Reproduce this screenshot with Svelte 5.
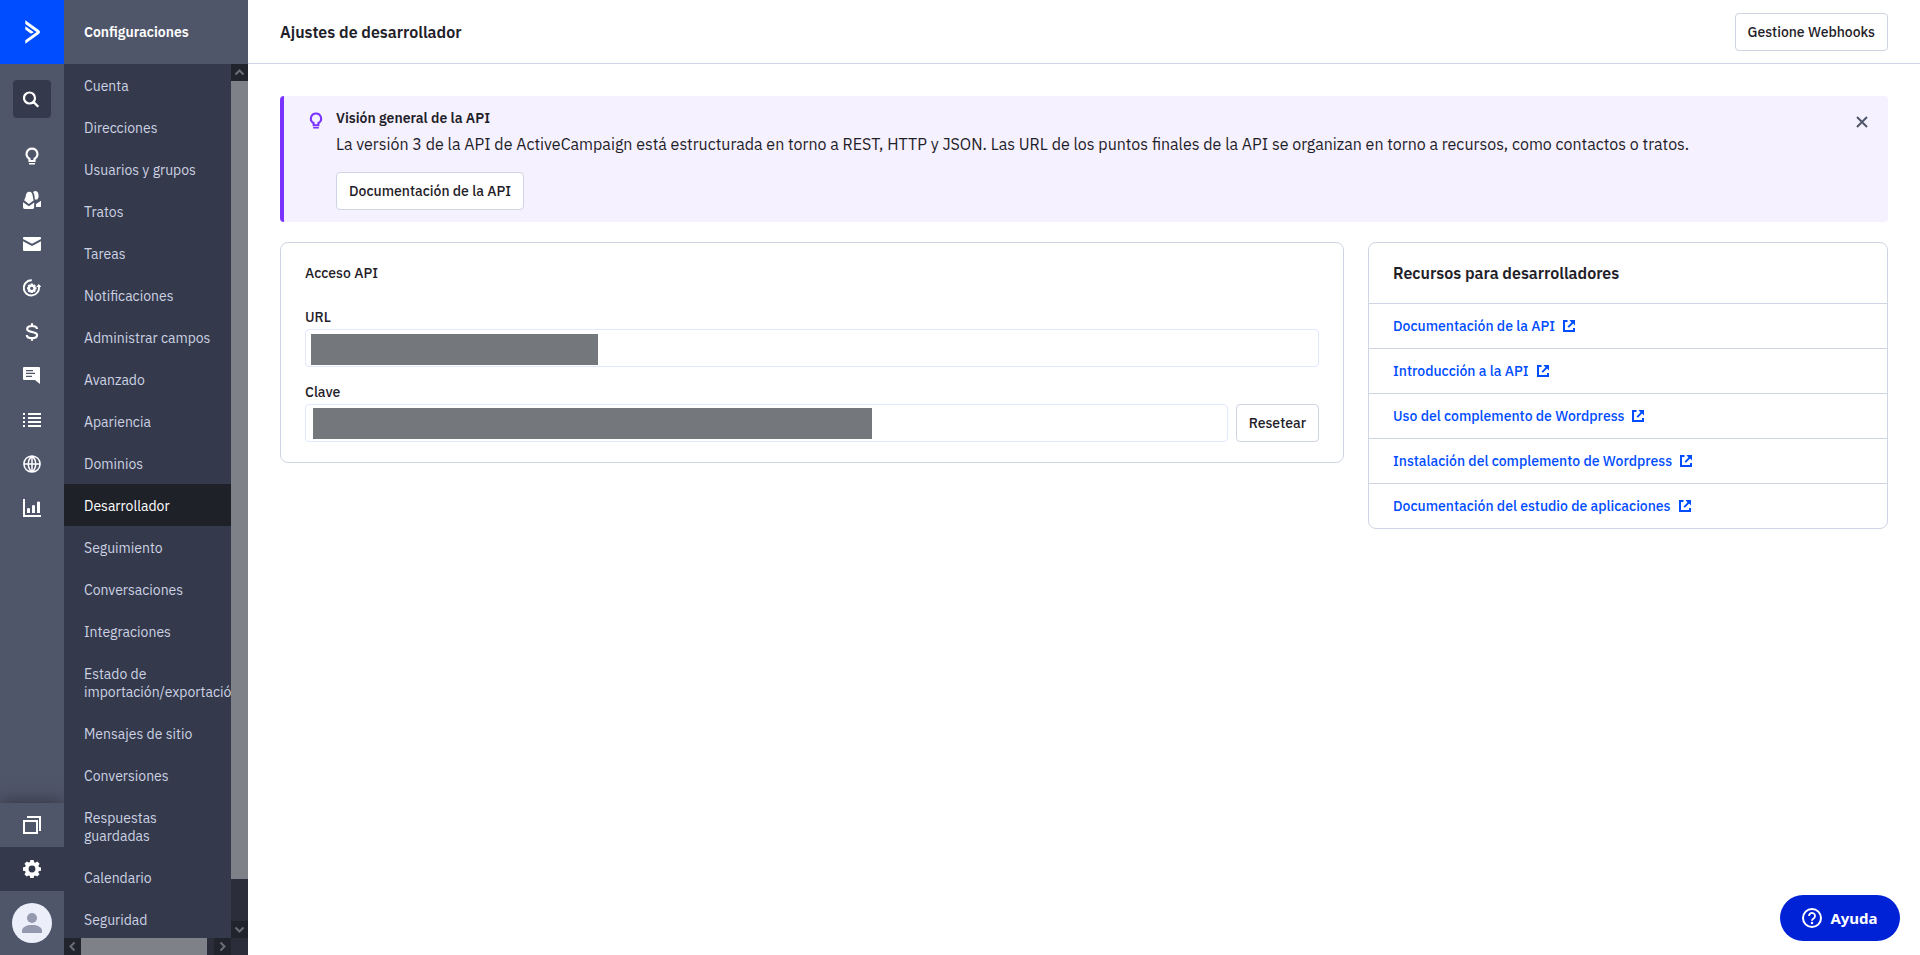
<script lang="ts">
    interface Icon {
        name: string;
        fill?: string;
        stroke?: string;
        width?: number;
    }

    const bulb =
        "M9 .5a6.5 6.5 0 0 0-3.6 11.9V15h7.2v-2.6A6.5 6.5 0 0 0 9 .5zm0 2.2a4.3 4.3 0 0 1 2.2 8l-.8.5V13H7.6v-1.8l-.8-.5a4.3 4.3 0 0 1 2.2-8zM6 15.9h6v1.7H6z";

    const gear =
        "M7.3 0h3.4l.4 2.2 1.3.5L14.3 1.5l2.3 2.3-1.2 1.9.5 1.3 2.1.4v3.3l-2.2.4-.5 1.3 1.2 1.9-2.3 2.3-1.9-1.2-1.300.5-.4 2.400H7.300l-.4-2.400-1.300-.5-1.900 1.200-2.300-2.300 1.200-1.900-.5-1.300L0 10.700V7.300l2.200-.4.5-1.300-1.200-1.900 2.300-2.300 1.900 1.200 1.300-.5zM9 5.600a3.400 3.400 0 1 0 0 6.800 3.400 3.400 0 0 0 0-6.800z";

    const railIcons: Icon[] = [
        { name: "Guías", fill: bulb },
        {
            name: "Contactos",
            fill: "M6.300.8c-2.200 0-3.300 2-3.600 4.300-.2 1.700-.9 3-1.600 4.200L5.900 13l4.900-3.700C10.200 8 9.900 6.800 9.800 5.100 9.600 2.800 8.500.8 6.300.8zM0 11.200l5.900 4 5.300-3.800V16c0 1.200-.6 2-1.700 2H1.800C.6 18 0 17.200 0 16zM12.400 0c2.500 0 3.400 3.100 3.200 5.400-.1 1.500-.7 2.400-1.300 3.200h-2.200c-.7-1.600-.4-3.200-.8-4.900-.3-1.300-.8-2-1.200-2.500.6-.8 1.400-1.200 2.300-1.200zM13 13l5-3.200v5.400c0 .6-.4.9-.9.9H13z",
        },
        {
            name: "Campañas",
            fill: "M1 2h16q1 0 1 1v1L9 8.800 0 4V3q0-1 1-1zM0 6.200l9 4.800 9-4.800V15q0 1-1 1H1q-1 0-1-1z",
        },
        {
            name: "Automatizaciones",
            fill: "M13.200 8 15.800 5 18.400 8zM7.600 4.600h2.200l.3 1.300 1.200-.6 1.500 1.500-.6 1.200 1.300.3v2l-1.300.4.6 1.200-1.500 1.500-1.200-.6-.3 1.200H7.600l-.3-1.200-1.200.6-1.500-1.500.6-1.200-1.200-.4v-2l1.200-.3-.6-1.200 1.500-1.500 1.200.6zM8.700 7.700a1.600 1.600 0 1 0 0 3.200 1.600 1.600 0 0 0 0-3.200z",
            stroke: "M8.800 1.300a7.600 7.600 0 1 0 7 6",
            width: 1.9,
        },
        {
            name: "Ofertas",
            stroke: "M9 .2v3.200M9 14.700v3.100M13.900 5.900C13.900 3.900 12 3 9 3S4.200 4 4.200 5.900c0 4.200 9.900 2 9.900 6.100 0 2.100-2 3.100-5.100 3.100s-5.200-1-5.200-3.100",
            width: 2.2,
        },
        {
            name: "Conversaciones",
            fill: "M1 0h15q1 0 1 1v16l-5-4H1q-1 0-1-1V1q0-1 1-1zm2 3v1.200h7V3zm0 2.800V7h9V5.800zm0 2.900v1.200h6V8.700z",
        },
        {
            name: "Listas",
            fill: "M0 2h2v2H0zM5 2h13v2H5zM0 6h2v2H0zM5 6h13v2H5zM0 10h2v2H0zM5 10h13v2H5zM0 14h2v2H0zM5 14h13v2H5z",
        },
        {
            name: "Sitio web",
            stroke: "M9 .9a8.100 8.100 0 1 0 0 16.200A8.100 8.100 0 0 0 9 .9zM9 .9c-5 4.500-5 11.700 0 16.200M9 .9c5 4.500 5 11.700 0 16.200M9 1v16M1 9h16",
            width: 1.5,
        },
        {
            name: "Informes",
            fill: "M0 0h2v16h16v2H0zM4 10q0-1 1.500-1T7 10v4H4zM9 7q0-1 1.500-1T12 7v7H9zM14 3.500q0-1 1.500-1t1.500 1V14h-3z",
        },
    ];

    const settings = [
        "Cuenta",
        "Direcciones",
        "Usuarios y grupos",
        "Tratos",
        "Tareas",
        "Notificaciones",
        "Administrar campos",
        "Avanzado",
        "Apariencia",
        "Dominios",
        "Desarrollador",
        "Seguimiento",
        "Conversaciones",
        "Integraciones",
        "Estado de importación/exportación",
        "Mensajes de sitio",
        "Conversiones",
        "Respuestas guardadas",
        "Calendario",
        "Seguridad",
    ];

    const resources = [
        "Documentación de la API",
        "Introducción a la API",
        "Uso del complemento de Wordpress",
        "Instalación del complemento de Wordpress",
        "Documentación del estudio de aplicaciones",
    ];

    let current = $state("Desarrollador");
    let bannerOpen = $state(true);
</script>

{#snippet icon(item: Icon)}
    <svg width="18" height="18" viewBox="0 0 18 18" aria-hidden="true">
        {#if item.fill}
            <path d={item.fill} fill="currentColor" fill-rule="evenodd" />
        {/if}
        {#if item.stroke}
            <path
                d={item.stroke}
                fill="none"
                stroke="currentColor"
                stroke-width={item.width ?? 2}
            />
        {/if}
    </svg>
{/snippet}

{#snippet arrow(d: string)}
    <span class="sb-button">
        <svg width="17" height="17" viewBox="0 0 17 17" aria-hidden="true">
            <path {d} fill="none" stroke="currentColor" stroke-width="2" />
        </svg>
    </span>
{/snippet}

<div class="app">
    <nav class="rail" aria-label="Principal">
        <a class="logo" href="#inicio" aria-label="Inicio">
            <svg width="64" height="64" viewBox="0 0 64 64" aria-hidden="true">
                <path
                    d="M25.300 20.300 38.800 29.900Q40 30.800 40 32t-1.200 2.100L25.300 43.800v-3.600L36.600 32 25.300 24zM25.300 26.200l8.300 5.800c-1 1.600-2.500 1.800-3.700.9l-4.600-3.300z"
                    fill="#fff"
                />
            </svg>
        </a>
        <button class="search" aria-label="Buscar">
            {@render icon({
                name: "Buscar",
                stroke: "M6.500 2.500a5.500 5.500 0 1 0 0 11 5.500 5.500 0 0 0 0-11zM10.400 11.900l4.900 4.900",
                width: 2.2,
            })}
        </button>
        {#each railIcons as item}
            <a class="rail-link" href="#{item.name}" aria-label={item.name}>
                {@render icon(item)}
            </a>
        {/each}
        <div class="rail-bottom">
            <a class="rail-link" href="#apps" aria-label="Aplicaciones">
                {@render icon({
                    name: "Aplicaciones",
                    stroke: "M1 5h13v12H1zM4 1h13v14",
                })}
            </a>
            <a class="rail-link on" href="#ajustes" aria-label="Configuraciones">
                {@render icon({ name: "Configuraciones", fill: gear })}
            </a>
            <button class="avatar" aria-label="Perfil">
                <svg width="40" height="40" viewBox="0 0 40 40" aria-hidden="true">
                    <circle cx="20" cy="20" r="20" fill="#eceff9" />
                    <circle cx="20" cy="15" r="5" fill="#9499b0" />
                    <path d="M10 30v-2.500c0-3.500 5-5.500 10-5.500s10 2 10 5.500V30z" fill="#9499b0" />
                </svg>
            </button>
        </div>
    </nav>

    <aside class="side">
        <h2>Configuraciones</h2>
        <div class="side-body">
            <ul>
                {#each settings as label}
                    <li>
                        <a
                            href="#{label}"
                            class:active={label === current}
                            onclick={() => (current = label)}>{label}</a
                        >
                    </li>
                {/each}
            </ul>
            <div class="scroll vertical">
                {@render arrow("M4.500 10.500l4-4 4 4")}
                <span class="thumb"></span>
                <span class="rest"></span>
                {@render arrow("M4.500 6.500l4 4 4-4")}
            </div>
            <div class="scroll horizontal">
                {@render arrow("M10.500 4.500l-4 4 4 4")}
                <span class="thumb"></span>
                <span class="rest"></span>
                {@render arrow("M6.500 4.500l4 4-4 4")}
            </div>
        </div>
    </aside>

    <div class="page">
        <header>
            <h1>Ajustes de desarrollador</h1>
            <button class="btn">Gestione Webhooks</button>
        </header>

        <main>
            {#if bannerOpen}
                <section class="banner">
                    <svg class="banner-icon" width="16" height="17" viewBox="1 0 16 18" aria-hidden="true">
                        <path d={bulb} fill="currentColor" fill-rule="evenodd" />
                    </svg>
                    <div class="banner-text">
                        <h3>Visión general de la API</h3>
                        <p>
                            La versión 3 de la API de ActiveCampaign está estructurada en
                            torno a REST, HTTP y JSON. Las URL de los puntos finales de la
                            API se organizan en torno a recursos, como contactos o tratos.
                        </p>
                        <button class="btn">Documentación de la API</button>
                    </div>
                    <button class="close" aria-label="Cerrar" onclick={() => (bannerOpen = false)}>
                        <svg width="12" height="12" viewBox="0 0 12 12" aria-hidden="true">
                            <path d="M1 1l10 10M11 1L1 11" stroke="currentColor" stroke-width="2" />
                        </svg>
                    </button>
                </section>
            {/if}

            <div class="columns">
                <section class="card access">
                    <h3>Acceso API</h3>
                    <label for="url">URL</label>
                    <div class="row">
                        <div class="field">
                            <input id="url" type="text" readonly />
                            <span class="mask url-mask"></span>
                        </div>
                    </div>
                    <label for="key">Clave</label>
                    <div class="row">
                        <div class="field">
                            <input id="key" type="text" readonly />
                            <span class="mask key-mask"></span>
                        </div>
                        <button class="btn">Resetear</button>
                    </div>
                </section>

                <section class="card resources">
                    <h2>Recursos para desarrolladores</h2>
                    <ul>
                        {#each resources as label}
                            <li>
                                <a href="#{label}">
                                    {label}
                                    <svg width="12" height="12" viewBox="0 0 12 12" aria-hidden="true">
                                        <path
                                            d="M0 0h4.500v2H2v8h8V8h2v4H0zM6.500 0H12v5.500l-1.900-1.900L5.900 7.800 4.500 6.400l4-4z"
                                            fill="currentColor"
                                        />
                                    </svg>
                                </a>
                            </li>
                        {/each}
                    </ul>
                </section>
            </div>
        </main>
    </div>

    <button class="help">
        <svg width="20" height="20" viewBox="0 0 20 20" aria-hidden="true">
            <circle cx="10" cy="10" r="9" fill="none" stroke="#fff" stroke-width="2" />
            <path
                d="M7 8a3 3 0 1 1 4.600 2.500c-1 .6-1.600 1.100-1.600 2.200"
                fill="none"
                stroke="#fff"
                stroke-width="1.800"
            />
            <circle cx="10" cy="15" r="1.200" fill="#fff" />
        </svg>
        Ayuda
    </button>
</div>

<style>
    :global(body) {
        margin: 0;
        background: #fff;
    }

    .app {
        display: flex;
        height: 100vh;
        overflow: hidden;
        font-family: "IBM Plex Sans", Roboto, sans-serif;
        font-size: 14px;
        line-height: 18px;
        color: #1f2129;
    }

    h1,
    h2,
    h3,
    p,
    ul {
        margin: 0;
        padding: 0;
    }

    ul {
        list-style: none;
    }

    a {
        text-decoration: none;
    }

    svg {
        display: block;
        flex: none;
    }

    button,
    input {
        box-sizing: border-box;
        font: inherit;
        color: inherit;
    }

    button {
        padding: 0;
        border: 0;
        background: none;
        cursor: pointer;
    }

    .rail {
        display: flex;
        flex: none;
        flex-direction: column;
        width: 64px;
        overflow: hidden;
        background: #50566a;
        color: #fff;
    }

    .logo {
        background: #004cff;
    }

    .search {
        display: flex;
        flex: none;
        align-items: center;
        justify-content: center;
        width: 38px;
        height: 38px;
        margin: 16px 13px;
        border-radius: 4px;
        background: #343a4b;
    }

    .rail-link {
        display: flex;
        flex: none;
        align-items: center;
        justify-content: center;
        height: 44px;
        color: #fff;
    }

    .rail-bottom {
        margin-top: auto;
        background: #50566a;
        box-shadow: 0 -2px 16px rgba(31, 33, 41, 0.6);
    }

    .on {
        background: #343a4b;
    }

    .avatar {
        display: block;
        padding: 12px;
    }

    .side {
        display: flex;
        flex: none;
        flex-direction: column;
        width: 184px;
        background: #343a4b;
    }

    .side h2 {
        flex: none;
        box-sizing: border-box;
        height: 64px;
        padding: 0 20px;
        background: #50566a;
        color: #fff;
        font-size: 14px;
        font-weight: 600;
        line-height: 64px;
    }

    .side-body {
        display: grid;
        flex: 1;
        grid-template: minmax(0, 1fr) 17px / minmax(0, 1fr) 17px;
        min-height: 0;
        background: #2b2e3a;
    }

    .side ul {
        overflow: hidden;
        background: #343a4b;
    }

    .side li a {
        display: block;
        padding: 13px 20px 11px;
        color: #ccd1e3;
    }

    .side li a.active {
        background: #1f2129;
        color: #fff;
    }

    .scroll {
        display: flex;
        background: #2b2e3a;
        color: #6b6e76;
    }

    .vertical {
        flex-direction: column;
    }

    .sb-button {
        flex: none;
        background: #22242d;
    }

    .thumb {
        flex: 95;
        background: #7f8188;
    }

    .rest {
        flex: 5;
    }

    .page {
        display: flex;
        flex: 1;
        flex-direction: column;
        min-width: 0;
    }

    header {
        display: flex;
        flex: none;
        box-sizing: border-box;
        align-items: center;
        justify-content: space-between;
        height: 64px;
        padding: 0 32px;
        border-bottom: 1px solid #cfd4e4;
    }

    h1,
    .resources h2 {
        font-size: 16px;
        font-weight: 600;
        line-height: 24px;
    }

    .btn {
        height: 38px;
        padding: 0 12px;
        border: 1px solid #cfd4e4;
        border-radius: 4px;
        background: #fff;
        font-weight: 500;
        white-space: nowrap;
    }

    main {
        padding: 32px;
    }

    .banner {
        display: flex;
        align-items: flex-start;
        margin-bottom: 20px;
        padding: 12px 20px 12px 22px;
        border-left: 4px solid #7a33ff;
        border-radius: 4px;
        background: #f5f1ff;
    }

    .banner-icon {
        margin: 4px 12px 0 2px;
        color: #7a33ff;
    }

    .banner-text {
        flex: 1;
    }

    .banner h3 {
        margin-bottom: 4px;
        font-size: 14px;
        font-weight: 600;
        line-height: 20px;
    }

    .banner p {
        margin-bottom: 16px;
        font-size: 16px;
        line-height: 24px;
    }

    .close {
        margin-top: 8px;
        color: #50566a;
    }

    .columns {
        display: flex;
        align-items: flex-start;
        gap: 24px;
    }

    .card {
        box-sizing: border-box;
        border: 1px solid #cfd4e4;
        border-radius: 8px;
    }

    .access {
        flex: 1;
        padding: 20px 24px;
    }

    .access h3 {
        margin-bottom: 25px;
        font-size: 14px;
        font-weight: 500;
        line-height: 20px;
    }

    .access label {
        display: block;
        padding-bottom: 3px;
        font-weight: 500;
    }

    .row {
        display: flex;
        gap: 8px;
    }

    .row + label {
        margin-top: 16px;
    }

    .field {
        position: relative;
        flex: 1;
    }

    .field input {
        display: block;
        width: 100%;
        height: 38px;
        padding: 0 12px;
        border: 1px solid #e2e8ff;
        border-radius: 4px;
        background: #fff;
    }

    .mask {
        position: absolute;
        height: 31px;
        background: #74777c;
    }

    .url-mask {
        top: 5px;
        left: 6px;
        width: 287px;
    }

    .key-mask {
        top: 4px;
        left: 8px;
        width: 559px;
    }

    .resources {
        width: calc(100% / 3 - 16px);
    }

    .resources h2 {
        padding: 18px 24px;
    }

    .resources li {
        border-top: 1px solid #cfd4e4;
    }

    .resources a {
        display: flex;
        align-items: center;
        gap: 8px;
        height: 44px;
        padding: 0 24px;
        color: #004cff;
        font-weight: 500;
    }

    .help {
        position: fixed;
        right: 20px;
        bottom: 14px;
        display: flex;
        align-items: center;
        justify-content: center;
        gap: 8px;
        width: 120px;
        height: 46px;
        border-radius: 23px;
        background: #0022d6;
        color: #fff;
        font-family: "Noto Sans", sans-serif;
        font-size: 15px;
        font-weight: 700;
    }
</style>
